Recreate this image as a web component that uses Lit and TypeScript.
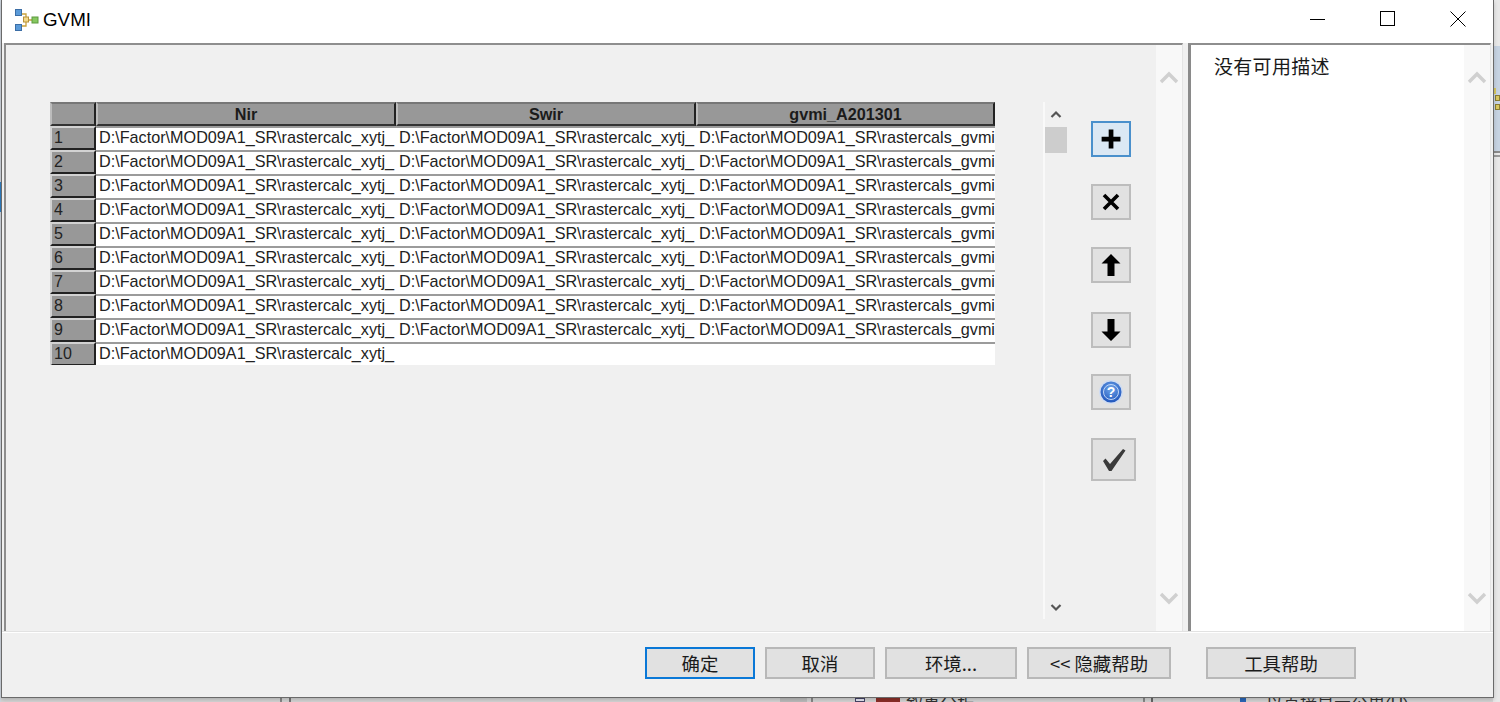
import { LitElement, html, css, svg } from "lit";
import { customElement } from "lit/decorators.js";

const NIR = "D:\\Factor\\MOD09A1_SR\\rastercalc_xytj_";
const GV = "D:\\Factor\\MOD09A1_SR\\rastercals_gvmi";
const rows = [1, 2, 3, 4, 5, 6, 7, 8, 9, 10];

const chevron = (up: boolean) => html`<svg width="20" height="14" viewBox="0 0 20 14">
  <path d=${up ? "M2 12 L10 4 L18 12" : "M2 2 L10 10 L18 2"} fill="none" stroke="currentColor" stroke-width="3.4"></path>
</svg>`;

const smallChevron = (up: boolean) => html`<svg class="sm" width="12" height="9" viewBox="0 0 12 9">
  <path d=${up ? "M1.5 7 L6 2.5 L10.5 7" : "M1.5 2 L6 6.5 L10.5 2"} fill="none" stroke="#555" stroke-width="2.2"></path>
</svg>`;

const icons = {
  plus: svg`<path d="M9.5 2h5v7.5H22v5h-7.5V22h-5v-7.5H2v-5h7.5z" transform="translate(1.6 1.6) scale(.87)" fill="#000"/>`,
  cross: svg`<path d="M5 5 L19 19 M19 5 L5 19" stroke="#000" stroke-width="3.6" fill="none"/>`,
  up: svg`<path d="M12 1 L21.5 10.5 H15.5 V23 H8.5 V10.5 H2.5 Z" fill="#000"/>`,
  down: svg`<path d="M12 23 L21.5 13.5 H15.5 V1 H8.5 V13.5 H2.5 Z" fill="#000"/>`,
};

@customElement("app-root")
export class AppRoot extends LitElement {
  static styles = css`
    :host { display: block; width: 1500px; height: 702px; position: relative; overflow: hidden; background: #d6d6d6; font-family: "Liberation Sans", "Noto Sans CJK SC", sans-serif; }
    .bg { position: absolute; }
    .bg-right { left: 1493px; top: 0; width: 7px; height: 702px; background: #e8e8e8; }
    .bg-blue { left: 1493px; top: 46px; width: 7px; height: 105px; background: #c6d3e2; }
    .bg-y0 { left: 1494px; top: 88px; width: 2px; height: 6px; background: #d9c860; }
    .bg-y1 { left: 1495px; top: 95px; width: 5px; height: 6px; background: #d9c860; border: 1px solid #8a7c30; box-sizing: border-box; }
    .bg-y2 { left: 1495px; top: 104px; width: 5px; height: 6px; background: #d9c860; border: 1px solid #8a7c30; box-sizing: border-box; }
    .bg-l1 { left: 1493px; top: 151px; width: 7px; height: 2px; background: #8a8a8a; }
    .bg-l2 { left: 1493px; top: 155px; width: 7px; height: 2px; background: #9a9a9a; }
    .bg-left { left: 0; top: 0; width: 1px; height: 702px; background: #cfd6de; }
    .bg-lb { left: 0; top: 182px; width: 1px; height: 30px; background: #2f7fc4; }
    .bg-b1 { left: 280px; top: 698px; width: 2px; height: 4px; background: #888; }
    .bg-b2 { left: 289px; top: 698px; width: 2px; height: 4px; background: #777; }
    .bg-b0 { left: 780px; top: 698px; width: 27px; height: 4px; background: #bdbdbd; }
    .bg-b3 { left: 811px; top: 698px; width: 2px; height: 4px; background: #888; }
    .bg-b4 { left: 855px; top: 698px; width: 10px; height: 4px; background: #e8e8f4; border: 1px solid #446; box-sizing: border-box; }
    .bg-b5 { left: 876px; top: 698px; width: 24px; height: 4px; background: #8c2f28; }
    .bg-b7 { left: 1143px; top: 698px; width: 2px; height: 4px; background: #888; }
    .bg-b8 { left: 1151px; top: 698px; width: 2px; height: 4px; background: #666; }
    .bg-t1, .bg-t2 { top: 695px; font-size: 17px; line-height: 20px; color: #333; white-space: nowrap; height: 7px; overflow: hidden; }
    .bg-t1 { left: 906px; }
    .bg-t2 { left: 1266px; }
    .bg-b6 { left: 1240px; top: 698px; width: 6px; height: 4px; background: #2a66b8; }

    .window { position: absolute; left: 1px; top: 0; width: 1493px; height: 698px; box-sizing: border-box; border: 1px solid #6a6a6a; border-top: 0; background: #f0f0f0; display: flex; flex-direction: column; box-shadow: 0 2px 4px rgba(0, 0, 0, .18); }

    .title { height: 43px; flex: none; background: #fff; display: flex; align-items: center; padding-left: 13px; }
    .title .appicon { flex: none; margin-right: 4px; margin-top: -4px; }
    .title .name { font-family: "Liberation Sans", sans-serif; font-size: 18.8px; color: #000; margin-top: -4px; flex: 1; }
    .ctl { flex: none; width: 70px; height: 43px; display: flex; align-items: center; justify-content: center; margin-top: -6px; }

    .main { flex: 1; min-height: 0; display: flex; height: 587px; }
    .left { width: 1179px; flex: none; margin-left: 2px; box-sizing: border-box; border-top: 2px solid #8e8e8e; border-left: 2px solid #8e8e8e; border-right: 1px solid #e4e4e4; background: #f0f0f0; display: flex; padding-top: 57px; padding-left: 44px; position: relative; }
    .right { margin-left: 5px; width: 303px; flex: none; box-sizing: border-box; border-top: 2px solid #8e8e8e; border-left: 3px solid #8a8a8a; border-right: 1px solid #e4e4e4; background: #fff; display: flex; }
    .desc { flex: 1; padding: 11px 0 0 23px; font-size: 19px; line-height: 24px; color: #1a1a1a; letter-spacing: .3px; }

    .rail { width: 26px; flex: none; background: #f8f8f8; display: flex; flex-direction: column; align-items: center; justify-content: space-between; padding: 25px 0 25px; box-sizing: border-box; color: #d0d0d0; }
    .left > .rail { position: absolute; right: 0; top: 0; bottom: 0; }

    .grid { display: grid; grid-template-columns: 46px 300px 300px 299px; grid-auto-rows: 24px; width: 945px; height: 263px; overflow: hidden; align-self: flex-start; background: #fff; }
    .hd, .rh { background: #989898; box-sizing: border-box; border: 2px solid; border-color: #d2d2d2 #222 #222 #d2d2d2; color: #111; overflow: hidden; }
    .hd { text-align: center; font-weight: bold; font-size: 16.2px; line-height: 20px; border-top-color: #777; border-right-color: #222; border-left-color: #bcbcbc; border-bottom-color: #333; color: #1b1b1b; height: 24px; }
    .rh { padding-left: 2px; font-size: 16px; line-height: 20px; color: #222; border-right-color: #222; }
    .cell { background: #fff; box-sizing: border-box; border-top: 2px solid #9b9b9b; padding: 0 0 0 3px; font-size: 16.2px; line-height: 19px; color: #222; white-space: nowrap; overflow: hidden; }

    .vscroll { flex: none; margin-left: 48px; width: 24px; height: 517px; border-left: 2px solid #f9f9f9; box-sizing: border-box; display: flex; flex-direction: column; align-items: center; }
    .sm { flex: none; }
    .vscroll .sm:first-child { margin-top: 8px; }
    .thumb { width: 22px; height: 26px; background: #cdcdcd; margin-top: 8px; flex: none; align-self: flex-start; }
    .spacer { flex: 1; }
    .vscroll .sm:last-child { margin-bottom: 7px; }

    .tools { flex: none; margin-left: 24px; margin-top: 19px; display: flex; flex-direction: column; gap: 27px; align-items: flex-start; }
    .tb { width: 40px; height: 36px; box-sizing: border-box; border: 2px solid #bdbdbd; background: #e1e1e1; display: flex; align-items: center; justify-content: center; padding: 0; flex: none; }
    .tb.on { background: #dbe8f4; border-color: #4a90cc; }
    .tb.dn { margin-top: 2px; }
    .tb.hp { margin-top: -1px; }
    .tb.big { width: 45px; height: 43px; margin-top: 1px; }

    .foot { height: 66px; flex: none; box-sizing: border-box; border-top: 1px solid #e2e2e2; box-shadow: inset 0 1px 0 #fff; background: #f0f0f0; display: flex; align-items: flex-start; padding: 15px 0 0 643px; }
    .btn { height: 32px; box-sizing: border-box; border: 2px solid #b8b8b8; background: #e1e1e1; font-family: "Noto Sans CJK SC", "Liberation Sans", sans-serif; font-size: 18.4px; line-height: 28px; color: #1a1a1a; padding: 0; text-align: center; white-space: nowrap; flex: none; }
    .btn.def { border-color: #0a78d7; }
    .w110 { width: 110px; margin-right: 10px; }
    .w132 { width: 132px; margin-right: 10px; }
    .w144 { width: 144px; margin-right: 35px; }
    .w150 { width: 150px; }
  `;

  private cells(i: number) {
    const last = i === 10;
    return html`
      <div class="rh">${i}</div>
      <div class="cell">${NIR}</div>
      <div class="cell">${last ? "" : NIR}</div>
      <div class="cell">${last ? "" : GV}</div>`;
  }

  render() {
    return html`
      <div class="bg bg-right"></div><div class="bg bg-blue"></div><div class="bg bg-y0"></div><div class="bg bg-y1"></div><div class="bg bg-y2"></div>
      <div class="bg bg-l1"></div><div class="bg bg-l2"></div><div class="bg bg-left"></div><div class="bg bg-lb"></div>
      <div class="bg bg-b1"></div><div class="bg bg-b2"></div><div class="bg bg-b0"></div><div class="bg bg-b3"></div><div class="bg bg-b4"></div><div class="bg bg-b5"></div><div class="bg bg-b6"></div><div class="bg bg-b7"></div><div class="bg bg-b8"></div>
      <div class="bg bg-t1">叙事分析</div><div class="bg bg-t2">以直接显示公里(U)</div>
      <div class="window">
        <div class="title">
          <svg class="appicon" width="24" height="24" viewBox="0 0 24 24">
            <path d="M5 6 H11 V18 H5 M11 12 H18" fill="none" stroke="#c9a13a" stroke-width="1.3"></path>
            <rect x="0.5" y="1.5" width="6" height="6" fill="#5a9ad8" stroke="#3c6ea6"></rect>
            <rect x="0.5" y="16.5" width="6" height="6" fill="#5a9ad8" stroke="#3c6ea6"></rect>
            <rect x="8.5" y="9" width="5" height="5" fill="#f2d98a" stroke="#b8923a"></rect>
            <rect x="17" y="9" width="6" height="6" fill="#86c860" stroke="#5d9a3e"></rect>
          </svg>
          <span class="name">GVMI</span>
          <div class="ctl"><svg width="16" height="16" viewBox="0 0 16 16"><path d="M0 8.5H15" stroke="#000"></path></svg></div>
          <div class="ctl"><svg width="16" height="16" viewBox="0 0 16 16"><rect x=".5" y=".5" width="14" height="14" fill="none" stroke="#000"></rect></svg></div>
          <div class="ctl"><svg width="16" height="16" viewBox="0 0 16 16"><path d="M.5 .5L15.5 15.5M15.5 .5L.5 15.5" stroke="#000"></path></svg></div>
        </div>
        <div class="main">
          <div class="left">
            <div class="grid">
              <div class="hd"></div><div class="hd">Nir</div><div class="hd">Swir</div><div class="hd">gvmi_A201301</div>
              ${rows.map((i) => this.cells(i))}
            </div>
            <div class="vscroll">
              ${smallChevron(true)}
              <div class="thumb"></div>
              <div class="spacer"></div>
              ${smallChevron(false)}
            </div>
            <div class="tools">
              <button class="tb on"><svg width="26" height="26" viewBox="0 0 24 24">${icons.plus}</svg></button>
              <button class="tb"><svg width="24" height="24" viewBox="0 0 24 24">${icons.cross}</svg></button>
              <button class="tb"><svg width="24" height="24" viewBox="0 0 24 24">${icons.up}</svg></button>
              <button class="tb dn"><svg width="24" height="24" viewBox="0 0 24 24">${icons.down}</svg></button>
              <button class="tb hp">
                <svg width="26" height="26" viewBox="0 0 26 26">
                  <defs><radialGradient id="q" cx=".5" cy=".35" r=".7"><stop offset="0" stop-color="#6fa6ea"></stop><stop offset="1" stop-color="#1a4fb8"></stop></radialGradient></defs>
                  <circle cx="13" cy="13" r="12" fill="#cfdcf2"></circle>
                  <circle cx="13" cy="13" r="10.5" fill="url(#q)"></circle>
                  <circle cx="13" cy="13" r="7.5" fill="none" stroke="#cfe0fa" stroke-width=".9"></circle>
                  <text x="13" y="18" text-anchor="middle" font-family="Liberation Sans" font-weight="bold" font-size="14" fill="#fff">?</text>
                </svg>
              </button>
              <button class="tb big">
                <svg width="28" height="28" viewBox="0 0 28 28"><path d="M3 15 L5.5 12.5 L10 18 L23 3 L25.5 4.5 L11.5 25 L9 25 Z" fill="#3a3a3a"></path></svg>
              </button>
            </div>
            <div class="rail">${chevron(true)}${chevron(false)}</div>
          </div>
          <div class="right">
            <div class="desc">没有可用描述</div>
            <div class="rail">${chevron(true)}${chevron(false)}</div>
          </div>
        </div>
        <div class="foot">
          <button class="btn def w110">确定</button>
          <button class="btn w110">取消</button>
          <button class="btn w132">环境...</button>
          <button class="btn w144">&lt;&lt; 隐藏帮助</button>
          <button class="btn w150">工具帮助</button>
        </div>
      </div>
    `;
  }
}
